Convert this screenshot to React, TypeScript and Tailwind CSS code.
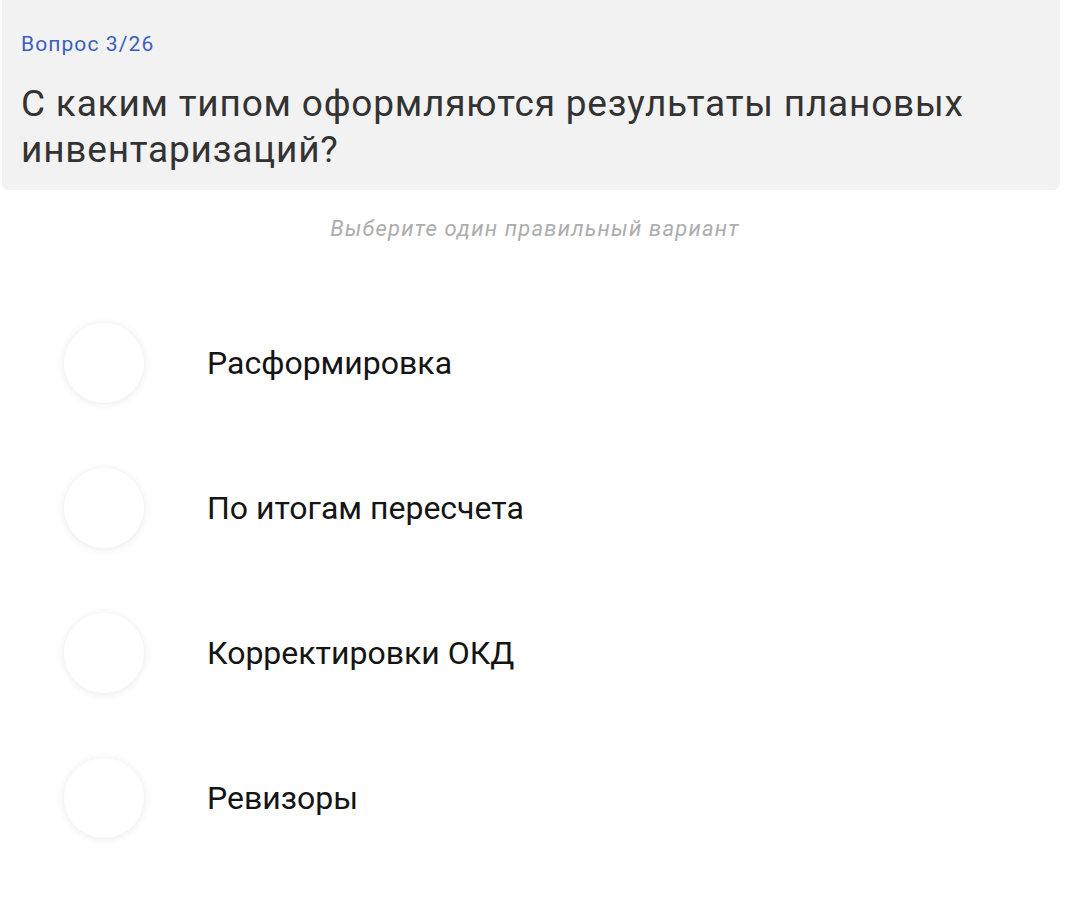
const options = ["Расформировка", "По итогам пересчета", "Корректировки ОКД", "Ревизоры"];

function Option({ label }: { label: string }) {
  return (
    <label className="flex h-[145px] items-center">
      <span className="ml-[64px] h-[80px] w-[80px] shrink-0 rounded-full bg-white shadow-[0_1px_10px_rgba(0,0,0,0.09)]" />
      <span className="ml-[63px] text-[32px] leading-[40px] text-[#141414]">{label}</span>
    </label>
  );
}

export default function App() {
  return (
    <div className="min-h-[906px] w-[1070px] bg-white font-['Roboto',sans-serif]">
      <header className="mx-[2px] mr-[10px] rounded-b-[7px] bg-[#f2f2f2] px-[19px] pb-[17px] pt-[30px]">
        <p className="text-[21px] leading-[28px] tracking-[1.1px] text-[#3a5fbf]">Вопрос 3/26</p>
        <h1 className="mt-[23px] text-[37px] leading-[46px] tracking-[0.8px] text-[#333333]">
          С каким типом оформляются результаты плановых инвентаризаций?
        </h1>
      </header>

      <p className="mt-[25px] text-center text-[22px] leading-[28px] italic tracking-[1.2px] text-[#adadad]">
        Выберите один правильный вариант
      </p>

      <div className="mt-[47px]">
        {options.map((o) => (
          <Option key={o} label={o} />
        ))}
      </div>
    </div>
  );
}
